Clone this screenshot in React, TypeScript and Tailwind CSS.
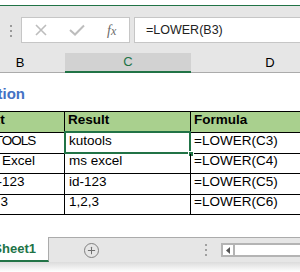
import { Plus } from "lucide-react"

function FormulaBar() {
  return (
    <div className="flex h-[47px] bg-[#e6e6e6] pt-[11px]">
      <div className="flex w-[21px] flex-col items-center gap-[3px] pt-[8px]">
        <span className="h-[2px] w-[2px] bg-[#9a9a9a]" />
        <span className="h-[2px] w-[2px] bg-[#9a9a9a]" />
        <span className="h-[2px] w-[2px] bg-[#9a9a9a]" />
      </div>
      <div className="flex h-[26px] w-[109px] items-center border border-[#c6c6c6] bg-white">
        <svg width="14" height="14" viewBox="0 0 14 14" className="ml-[12px]">
          <path d="M2 2 L12 12 M12 2 L2 12" stroke="#bdbdbd" strokeWidth="1.6" fill="none" />
        </svg>
        <svg width="16" height="12" viewBox="0 0 16 12" className="ml-[21px]">
          <path d="M1 6 L6 10.5 L15 1.5" stroke="#bdbdbd" strokeWidth="2" fill="none" />
        </svg>
        <span className="ml-[22px] font-['Liberation_Serif',serif] text-[14px] italic text-[#6a6a6a]">
          f<span className="text-[12px]">x</span>
        </span>
      </div>
      <div className="ml-[4px] flex h-[26px] flex-1 items-center border border-r-0 border-[#c6c6c6] bg-white pl-[11px] text-[12.5px] text-[#222]">
        =LOWER(B3)
      </div>
    </div>
  )
}

function ColumnHeaders() {
  return (
    <div className="flex h-[20px] bg-[#e6e6e6] text-[13px]">
      <div className="ml-[-25px] flex w-[90px] shrink-0 items-center justify-center border-b border-[#ababab] text-black">
        B
      </div>
      <div className="flex w-[126px] shrink-0 items-center justify-center border-b-2 border-[#217346] bg-[#d2d2d2] text-[#217346]">
        C
      </div>
      <div className="flex w-[158px] shrink-0 items-center justify-center border-b border-[#ababab] text-black">
        D
      </div>
    </div>
  )
}

const rows = [
  { b: "KUTOOLS", c: "kutools", d: "=LOWER(C3)", h: "h-[21px]", t: "tracking-[-1px]" },
  { b: "MS Excel", c: "ms excel", d: "=LOWER(C4)", h: "h-[20px]", t: "" },
  { b: "ID-123", c: "id-123", d: "=LOWER(C5)", h: "h-[21px]", t: "pl-[6px]" },
  { b: "1,2,3", c: "1,2,3", d: "=LOWER(C6)", h: "h-[20px]", t: "" },
]

function Table() {
  return (
    <div className="ml-[-25px] flex w-[374px] flex-col border-t border-black text-[13.5px] text-black">
      <div className="flex h-[21px] bg-[#a9d08e] font-bold">
        <div className="flex w-[90px] items-end border-r border-b border-black pb-[2px] pl-[3px] whitespace-nowrap">
          Text
        </div>
        <div className="flex w-[126px] items-end border-r border-b border-black pb-[2px] pl-[3px]">Result</div>
        <div className="flex w-[158px] items-end border-b border-black pb-[2px] pl-[3px]">Formula</div>
      </div>
      {rows.map((r, i) => (
        <div key={r.c} className={`flex ${r.h}`}>
          <div className="flex w-[90px] items-end border-r border-b border-black pb-[2px] pl-[3px] whitespace-nowrap">
            <span className={r.t}>{r.b}</span>
          </div>
          <div className="relative flex w-[126px] items-end border-r border-b border-black pb-[2px] pl-[4px]">
            {r.c}
            {i === 0 && (
              <>
                <span className="absolute top-[-2px] left-[-1px] right-[-1px] bottom-[-1px] border-2 border-[#217346]" />
                <span className="absolute right-[-4px] bottom-[-4px] h-[6px] w-[6px] border border-white bg-[#217346]" />
              </>
            )}
          </div>
          <div className="flex w-[158px] items-end border-b border-black pb-[2px] pl-[3px]">{r.d}</div>
        </div>
      ))}
    </div>
  )
}

function SheetTabs() {
  return (
    <div className="flex h-[25px] bg-[#e6e6e6]">
      <div className="flex w-[49px] items-center justify-end border-r border-[#ababab] border-b-2 border-b-[#217346] bg-white pr-[12px] text-[13px] font-bold whitespace-nowrap text-[#217346]">
        Sheet1
      </div>
      <div className="flex flex-1 items-center border-t border-[#ababab]">
        <Plus className="ml-[35px] h-[15px] w-[15px] rounded-full border border-[#808080] p-[1px] text-[#707070]" strokeWidth={2.2} />
        <div className="ml-[106px] flex flex-col gap-[3px]">
          <span className="h-[2px] w-[2px] bg-[#a0a0a0]" />
          <span className="h-[2px] w-[2px] bg-[#a0a0a0]" />
          <span className="h-[2px] w-[2px] bg-[#a0a0a0]" />
        </div>
        <div className="ml-[14px] flex h-[14px] flex-1 border-2 border-r-0 border-[#b4b4b4] bg-white">
          <div className="flex w-[12px] items-center justify-center border-r-2 border-[#b4b4b4]">
            <svg width="4" height="7" viewBox="0 0 4 7">
              <path d="M4 0 L0 3.5 L4 7 Z" fill="#555" />
            </svg>
          </div>
        </div>
      </div>
    </div>
  )
}

export default function App() {
  return (
    <div className="flex h-[272px] w-[300px] flex-col overflow-hidden bg-white font-['Liberation_Sans',Arial,sans-serif]">
      <div className="h-[5px] bg-white" />
      <div className="h-px bg-[#217346]" />
      <FormulaBar />
      <ColumnHeaders />
      <div className="flex h-[38px] items-start pt-[10px]">
        <div className="flex w-[25px] justify-end whitespace-nowrap text-[15px] font-bold text-[#4472c4]">
          LOWER Function
        </div>
      </div>
      <Table />
      <div className="h-[22px]" />
      <SheetTabs />
      <div className="flex-1 bg-gradient-to-b from-[#dcdcdc] to-white" />
    </div>
  )
}
